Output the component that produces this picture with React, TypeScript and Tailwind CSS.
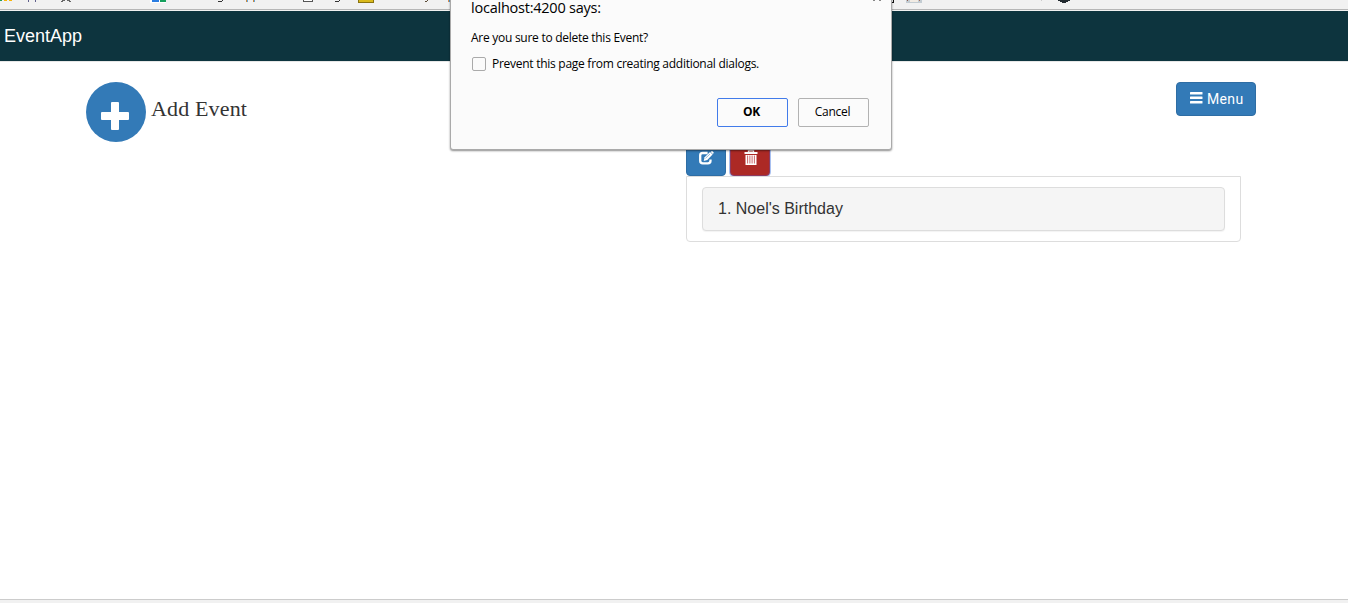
import React from "react";

function BookmarkStrip() {
  return (
    <svg className="block h-[9px] w-full shrink-0" viewBox="0 0 1348 9" preserveAspectRatio="none" shapeRendering="crispEdges">
      <rect x="0" y="0" width="2" height="1" fill="#1f9d58" />
      <rect x="4" y="0" width="3" height="1" fill="#f7b50c" />
      <rect x="9" y="0" width="3" height="1" fill="#f7b50c" />
      <path d="M28 0h1v2h-1zM35 0h1v2h-1z" fill="#5f5f8c" />
      <path d="M62 0h3v1h-3zM67 0h3v1h-3zM61 1h2v1h-2zM69 1h2v1h-2z" fill="#666" />
      <rect x="150" y="0" width="16" height="3" fill="#fff" />
      <rect x="152" y="0" width="7" height="2" fill="#2a7de1" />
      <rect x="160" y="0" width="6" height="2" fill="#16a05d" />
      <path d="M218 1h4v1h-4zM222 0h1v1h-1z" fill="#333" />
      <path d="M246 0h1v2h-1zM253 0h1v2h-1z" fill="#d08a3c" />
      <path d="M247 0h1v2h-1zM254 0h1v2h-1z" fill="#62a5dc" />
      <rect x="303" y="0" width="10" height="2" fill="#555" />
      <rect x="304" y="0" width="8" height="1" fill="#fff" />
      <path d="M335 1h4v1h-4zM339 0h1v1h-1z" fill="#333" />
      <rect x="358" y="0" width="16" height="3" fill="#8a7410" />
      <rect x="359" y="0" width="14" height="2" fill="#d9b91c" />
      <path d="M425 1h2v1h-2zM427 0h1v1h-1z" fill="#5b4a35" />
      <path d="M448 0h1v2h-1z" fill="#e0904c" />
      <path d="M449 0h1v2h-1z" fill="#4f9fdc" />
      <path d="M893 0h1v3h-3v-1h2z" fill="#111" />
      <rect x="906" y="0" width="16" height="3" fill="#c3ccd2" />
      <rect x="910" y="0" width="8" height="2" fill="#f1ebe3" />
      <rect x="907" y="0" width="1" height="1" fill="#925f50" />
      <rect x="919" y="0" width="1" height="1" fill="#a96f5c" />
      <rect x="1041" y="0" width="1" height="1" fill="#ccc" />
      <path d="M1058 0h12v1h-2v1h-2v1h-4v-1h-2v-1h-2z" fill="#222a30" />
    </svg>
  );
}

function Plus() {
  return (
    <svg className="mt-[8px] ml-[-2px] size-7" viewBox="0 0 28 28" fill="#fff">
      <rect x="10" y="0" width="8" height="28" rx="1" />
      <rect x="0" y="10" width="28" height="8" rx="1" />
    </svg>
  );
}

function EditIcon() {
  return (
    <svg className="mb-[3px] h-[14px] w-[15px]" viewBox="0 0 15 14">
      <path d="M8.6 2H3.6Q1.2 2 1.2 4.4v5.4q0 2.6 2.6 2.6h5.1q2.6 0 2.6-2.6V8.4" fill="none" stroke="#fff" strokeWidth="2.3" />
      <path d="M4.7 9.9l.9-3.6L11 1.1l2.6 2.4-5.3 5.4z" fill="#fff" />
      <path d="M11.7.9l.8-.7q.5-.4 1 0l1 1q.5.5 0 1l-.7.8z" fill="#fff" />
      <path d="M6.5 7.3L11 3" stroke="#337ab7" strokeWidth=".5" />
    </svg>
  );
}

function TrashIcon() {
  return (
    <svg className="mb-[3px] ml-px h-[15px] w-[14px]" viewBox="0 0 14 15">
      <path d="M4.5 2V.8h5V2" fill="none" stroke="#fff" strokeWidth="1.3" />
      <path d="M.5 2h13v2H.5z" fill="#fff" />
      <path d="M1.5 5h11v10h-11z" fill="#fff" />
      <path d="M3.6 5.5v8M5.9 5.5v8M8.1 5.5v8M10.4 5.5v8" stroke="#c4575a" strokeWidth=".9" />
    </svg>
  );
}

function ConfirmDialog() {
  return (
    <div role="dialog" className="absolute top-[-20px] left-[450px] h-[170px] w-[442px] rounded-[3px] border border-[#aaa] bg-[#fbfbfb] px-5 pt-5 font-['Open_Sans',sans-serif] text-black shadow-[0_1px_2px_rgba(0,0,0,0.45)]">
      <svg className="absolute top-[18px] right-[9px] h-[3px] w-[10px]" viewBox="0 0 10 3">
        <path d="M1 1h2v1H1zM7 1h2v1H7z" fill="#888" />
      </svg>
      <h2 className="mt-[-3px] h-[20px] text-[14.5px] leading-[20px] tracking-[-0.23px]">localhost:4200 says:</h2>
      <p className="mt-[12px] text-[12px] leading-[16px] tracking-[-0.27px]">Are you sure to delete this Event?</p>
      <label className="mt-[10px] flex h-4 items-center text-[12px] leading-[16px] tracking-[-0.27px]">
        <span className="mr-[6px] ml-px size-[14px] rounded-[2px] border border-[#aaa] bg-[#fbfbfb]" />
        Prevent this page from creating additional dialogs.
      </label>
      <div className="mt-[26px] mr-[2px] flex justify-end gap-[10px] text-[12px] tracking-[-0.3px]">
        <button className="h-[29px] w-[71px] rounded-[2px] border border-[#427bea] pr-[2px] pb-[2px] font-bold">OK</button>
        <button className="h-[29px] w-[71px] rounded-[2px] border border-[#b2b2b2] pr-[2px] pb-[2px]">Cancel</button>
      </div>
    </div>
  );
}

export default function App() {
  return (
    <div className="relative flex h-[603px] w-[1348px] flex-col overflow-hidden bg-white font-['Liberation_Sans',Arial,sans-serif] text-[#333]">
      <div className="h-[11px] shrink-0 bg-[#f1f1f1]">
        <BookmarkStrip />
        <div className="h-px bg-[#b6b6b6]" />
      </div>
      <header className="h-[51px] shrink-0 border-b border-[#e7e7e7] bg-[#0d343e] pl-1">
        <span className="block text-[18px] leading-[50px] text-white">EventApp</span>
      </header>
      <main className="flex-1 px-[86px] pt-5">
        <div className="flex h-[65px] items-start justify-between pr-[6px]">
          <div className="flex">
            <button className="flex size-[60px] items-center justify-center rounded-full bg-[#337ab7]"><Plus /></button>
            <span className="ml-[5px] pt-[13px] font-['Liberation_Serif',serif] text-[22px] leading-[28px] tracking-[0.15px]">Add Event</span>
          </div>
          <button className="flex h-[34px] w-[80px] items-center rounded-[4px] border border-[#2e6da4] bg-[#337ab7] pl-[13px] text-[14px] text-white">
            <svg className="mr-[4px] mb-[2px] h-3 w-[13px]" viewBox="0 0 13 12" fill="#fff">
              <rect width="12.5" height="2.6" rx=".5" /><rect y="4.5" width="12.5" height="2.6" rx=".5" /><rect y="9" width="12.5" height="2.6" rx=".5" />
            </svg>
            <span className="font-['Roboto',sans-serif] tracking-[0.35px]">Menu</span>
          </button>
        </div>
        <section className="ml-[600px] mt-[-5px] w-[555px]">
          <div className="flex gap-1">
            <button className="flex h-[34px] w-[40px] items-center justify-center rounded-[4px] border border-[#2e6da4] bg-[#337ab7]"><EditIcon /></button>
            <button className="flex h-[34px] w-[40px] items-center justify-center rounded-[4px] border border-[#8c3a62] bg-[#ac2925] shadow-[0_0_0_1px_#a8c0f0]"><TrashIcon /></button>
          </div>
          <div className="relative h-[66px] rounded-b-[4px] border border-[#ddd] bg-white px-[15px] py-[10px]">
            <div className="flex h-[44px] items-center rounded-[4px] border border-[#ddd] bg-[#f5f5f5] pl-[15px] text-[16px] shadow-[0_1px_1px_rgba(0,0,0,0.05)]">1. Noel's Birthday</div>
          </div>
        </section>
      </main>
      <div className="h-1 shrink-0 border-t border-[#ccc] bg-[#f1f1f1]" />
      <ConfirmDialog />
    </div>
  );
}
